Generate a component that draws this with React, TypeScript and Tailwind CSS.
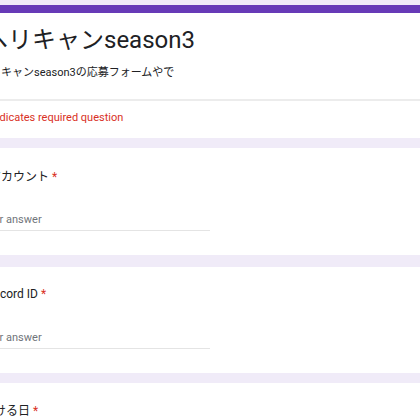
export default function App() {
  return (
    <div className="w-[420px] h-[420px] overflow-hidden bg-[#f0ebf8] font-['Roboto','Noto_Sans_CJK_JP',sans-serif] text-[#202124]">
      <div className="pt-[5px] flex flex-col">
        {/* header card */}
        <div className="bg-white border-t-[8px] border-[#673ab7]">
          <div className="pt-[11px] pb-[18px] whitespace-nowrap">
            <h1 className="-ml-[16px] text-[24px] leading-[32px] font-normal">
              ヘリキャンseason3
            </h1>
            <p className="-ml-[10px] mt-[9px] text-[11px] leading-[16px]">
              リキャンseason3の応募フォームやで
            </p>
          </div>
          <div className="border-t-[2px] border-[#ececec] pt-[9px] pb-[12px] whitespace-nowrap">
            <p className="-ml-[17px] text-[11px] leading-[16px] text-[#d93025]">
              * Indicates required question
            </p>
          </div>
        </div>

        {/* question cards */}
        <div className="mt-[10px] bg-white pt-[19px] pb-[24px] whitespace-nowrap">
          <p className="-ml-[11px] text-[12px] leading-[20px]">
            アカウント <span className="text-[#d93025]">*</span>
          </p>
          <div className="mt-[25px] w-[210px] border-b border-[#e4e4e4] pb-[2px]">
            <p className="-ml-[19px] text-[11px] leading-[16px] text-[#70757a]">Your answer</p>
          </div>
        </div>

        <div className="mt-[12px] bg-white pt-[17px] pb-[24px] whitespace-nowrap">
          <p className="-ml-[17px] text-[12px] leading-[20px]">
            Discord ID <span className="text-[#d93025]">*</span>
          </p>
          <div className="mt-[26px] w-[210px] border-b border-[#e4e4e4] pb-[2px]">
            <p className="-ml-[19px] text-[11px] leading-[16px] text-[#70757a]">Your answer</p>
          </div>
        </div>

        <div className="mt-[10px] bg-white pt-[18px] pb-[25px] whitespace-nowrap">
          <p className="-ml-[18px] text-[12px] leading-[20px]">
            行ける日 <span className="text-[#d93025]">*</span>
          </p>
          <div className="mt-[25px] w-[210px] border-b border-[#e4e4e4] pb-[2px]">
            <p className="-ml-[19px] text-[11px] leading-[16px] text-[#70757a]">Your answer</p>
          </div>
        </div>
      </div>
    </div>
  );
}
